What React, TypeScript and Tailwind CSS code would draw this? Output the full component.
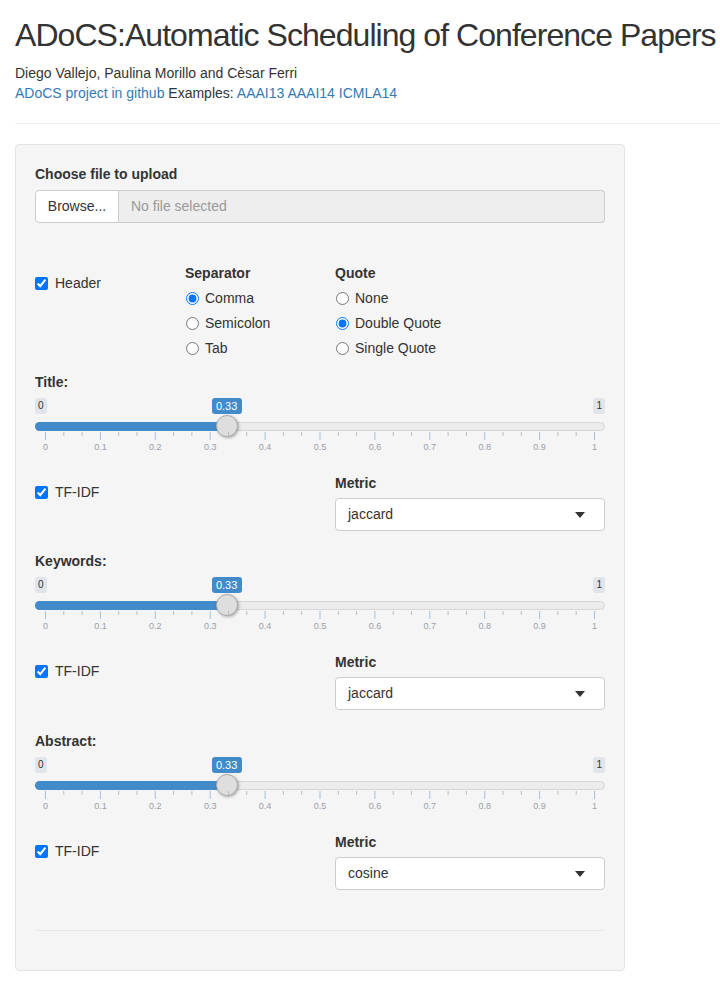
import React from "react";

const ticks = [0, 0.1, 0.2, 0.3, 0.4, 0.5, 0.6, 0.7, 0.8, 0.9, 1];

function Slider({ label, value }: { label: string; value: number }) {
  // grid goes from x=10.5 to x=559.5 inside the 570px slider
  const gx = (v: number) => 10.5 + v * 549;
  const hx = gx(value);
  return (
    <div>
      <div className="h-5 leading-5 font-bold text-[14px] text-[#333]">{label}</div>
      <div className="relative h-[66px]">
        <span className="absolute left-0 top-[6px] h-4 px-[3px] leading-4 text-[10px] rounded-[3px] bg-[#e1e4e9] text-[#333]">
          0
        </span>
        <span className="absolute right-0 top-[6px] h-4 px-[3px] leading-4 text-[10px] rounded-[3px] bg-[#e1e4e9] text-[#333]">
          1
        </span>
        <span
          className="absolute top-[6px] h-4 w-[30px] -ml-[15px] text-center leading-4 text-[11px] rounded-[3px] bg-[#428bca] text-white"
          style={{ left: hx }}
        >
          {value.toFixed(2)}
        </span>
        <div className="absolute left-0 right-0 top-[30px] h-[9px] rounded-full bg-[#ececec] border border-[#d6d6d6]" />
        <div
          className="absolute left-0 top-[30px] h-[9px] rounded-l-full bg-[#428bca]"
          style={{ width: hx }}
        />
        <div
          className="absolute top-[23px] w-[22px] h-[22px] -ml-[11px] rounded-full bg-[#dedede] border border-[#ababab] shadow-[1px_1px_3px_rgba(0,0,0,0.3)]"
          style={{ left: hx }}
        />
        <svg className="absolute left-0 top-[40px]" width="570" height="9">
          {ticks.map((t, i) => (
            <g key={t}>
              <line x1={gx(t)} x2={gx(t)} y1="0" y2="8" stroke="#a6bfdc" strokeWidth="1" />
              {i < ticks.length - 1 && (
                <>
                  <line x1={gx(t) + 18.3} x2={gx(t) + 18.3} y1="0" y2="4" stroke="#bdbdbd" strokeWidth="1" />
                  <line x1={gx(t) + 36.6} x2={gx(t) + 36.6} y1="0" y2="4" stroke="#bdbdbd" strokeWidth="1" />
                </>
              )}
            </g>
          ))}
        </svg>
        {ticks.map((t) => (
          <span
            key={t}
            className="absolute top-[49px] w-8 -ml-4 text-center leading-3 text-[9px] text-[#99a0aa]"
            style={{ left: gx(t) }}
          >
            {t}
          </span>
        ))}
      </div>
    </div>
  );
}

function MetricRow({ metric }: { metric: string }) {
  return (
    <div className="grid grid-cols-2 gap-x-[30px] mt-[15px]">
      <label className="flex items-center gap-[7px] mt-[9px] h-5 text-[14px] text-[#333]">
        <input type="checkbox" defaultChecked className="w-[13px] h-[13px] m-0 accent-[#0075ff]" />
        TF-IDF
      </label>
      <div>
        <div className="h-5 leading-5 font-bold text-[14px] text-[#333]">Metric</div>
        <div className="mt-[5px] h-[33px] flex items-center justify-between pl-3 pr-[19px] bg-white border border-[#ccc] rounded-[4px] text-[14px] text-[#333]">
          <span>{metric}</span>
          <span className="w-0 h-0 border-l-[5px] border-r-[5px] border-t-[6px] border-l-transparent border-r-transparent border-t-[#333]" />
        </div>
      </div>
    </div>
  );
}

function Radio({ label, checked }: { label: string; checked?: boolean }) {
  return (
    <label className="flex items-center gap-[6px] h-[25px] text-[14px] text-[#333]">
      <input type="radio" defaultChecked={checked} className="w-[13px] h-[13px] m-0 ml-px accent-[#0075ff]" />
      {label}
    </label>
  );
}

export default function App() {
  return (
    <div className="px-[15px] bg-white min-h-[984px] text-[#333]" style={{ fontFamily: "'Liberation Sans', Arial, sans-serif" }}>
      <h1 className="pt-[17px] text-[32px] leading-[36px] tracking-[-0.95px] whitespace-nowrap">
        ADoCS:Automatic Scheduling of Conference Papers
      </h1>
      <div className="mt-[10px] text-[14px] leading-5">
        <div>Diego Vallejo, Paulina Morillo and Cèsar Ferri</div>
        <div>
          <a className="text-[#337ab7]">ADoCS project in github</a> Examples:{" "}
          <a className="text-[#337ab7]">AAAI13</a> <a className="text-[#337ab7]">AAAI14</a>{" "}
          <a className="text-[#337ab7]">ICMLA14</a>
        </div>
      </div>
      <div className="mt-[20px] -mr-[15px] border-t border-[#eee]" />

      <div className="mt-[20px] w-[610px] bg-[#f5f5f5] border border-[#e3e3e3] rounded-[4px] px-[19px] pt-[19px] pb-[39px]">
        <div className="h-5 leading-5 font-bold text-[14px]">Choose file to upload</div>
        <div className="mt-[6px] flex h-[33px] text-[14px]">
          <div className="w-[84px] flex items-center justify-center bg-white border border-[#ccc] rounded-l-[4px]">
            Browse...
          </div>
          <div className="flex-1 flex items-center px-3 bg-[#eee] border border-l-0 border-[#ccc] rounded-r-[4px] text-[#999]">
            No file selected
          </div>
        </div>

        <div className="grid grid-cols-4 gap-x-[30px] mt-[40px]">
          <div>
            <label className="flex items-center gap-[7px] mt-[10px] h-5 text-[14px]">
              <input type="checkbox" defaultChecked className="w-[13px] h-[13px] m-0 accent-[#0075ff]" />
              Header
            </label>
          </div>
          <div>
            <div className="h-5 leading-5 font-bold text-[14px]">Separator</div>
            <div className="mt-[3px]">
              <Radio label="Comma" checked />
              <Radio label="Semicolon" />
              <Radio label="Tab" />
            </div>
          </div>
          <div>
            <div className="h-5 leading-5 font-bold text-[14px]">Quote</div>
            <div className="mt-[3px]">
              <Radio label="None" />
              <Radio label="Double Quote" checked />
              <Radio label="Single Quote" />
            </div>
          </div>
          <div />
        </div>

        <div className="mt-[11px]">
          <Slider label="Title:" value={0.33} />
          <MetricRow metric="jaccard" />
        </div>
        <div className="mt-[20px]">
          <Slider label="Keywords:" value={0.33} />
          <MetricRow metric="jaccard" />
        </div>
        <div className="mt-[21px]">
          <Slider label="Abstract:" value={0.33} />
          <MetricRow metric="cosine" />
        </div>

        <div className="mt-[40px] border-t border-[#e8e8e8]" />
      </div>
    </div>
  );
}
